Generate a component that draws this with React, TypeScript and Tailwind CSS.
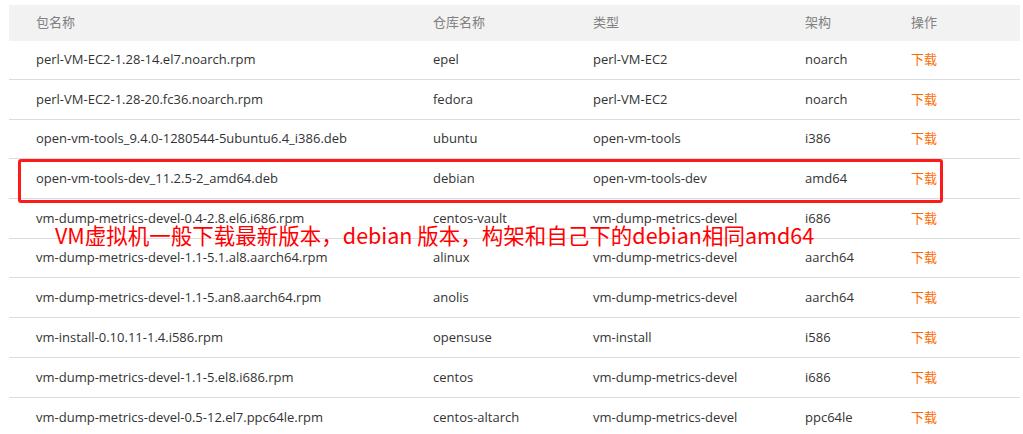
import React from "react";

type Row = {
  name: string;
  repo: string;
  kind: string;
  arch: string;
  h: string;
};

const ROWS: Row[] = [
  { name: "perl-VM-EC2-1.28-14.el7.noarch.rpm", repo: "epel", kind: "perl-VM-EC2", arch: "noarch", h: "h-[39px]" },
  { name: "perl-VM-EC2-1.28-20.fc36.noarch.rpm", repo: "fedora", kind: "perl-VM-EC2", arch: "noarch", h: "h-[40px]" },
  { name: "open-vm-tools_9.4.0-1280544-5ubuntu6.4_i386.deb", repo: "ubuntu", kind: "open-vm-tools", arch: "i386", h: "h-[39px]" },
  { name: "open-vm-tools-dev_11.2.5-2_amd64.deb", repo: "debian", kind: "open-vm-tools-dev", arch: "amd64", h: "h-[40px]" },
  { name: "vm-dump-metrics-devel-0.4-2.8.el6.i686.rpm", repo: "centos-vault", kind: "vm-dump-metrics-devel", arch: "i686", h: "h-[40px]" },
  { name: "vm-dump-metrics-devel-1.1-5.1.al8.aarch64.rpm", repo: "alinux", kind: "vm-dump-metrics-devel", arch: "aarch64", h: "h-[39px]" },
  { name: "vm-dump-metrics-devel-1.1-5.an8.aarch64.rpm", repo: "anolis", kind: "vm-dump-metrics-devel", arch: "aarch64", h: "h-[40px]" },
  { name: "vm-install-0.10.11-1.4.i586.rpm", repo: "opensuse", kind: "vm-install", arch: "i586", h: "h-[40px]" },
  { name: "vm-dump-metrics-devel-1.1-5.el8.i686.rpm", repo: "centos", kind: "vm-dump-metrics-devel", arch: "i686", h: "h-[40px]" },
  { name: "vm-dump-metrics-devel-0.5-12.el7.ppc64le.rpm", repo: "centos-altarch", kind: "vm-dump-metrics-devel", arch: "ppc64le", h: "h-[40px]" },
];

const FONT = "font-['Open_Sans','Noto_Sans_CJK_SC',sans-serif]";

export default function App() {
  return (
    <div className={`relative h-[434px] w-[1023px] overflow-hidden bg-white pl-[9px] pt-[5px] text-[13px] ${FONT}`}>
      <div className="w-[1011px]">
        <div className="flex h-[36px] items-center bg-[#f2f2f2] text-[#808080]">
          <div className="w-[424px] pl-[27px]">包名称</div>
          <div className="w-[160px]">仓库名称</div>
          <div className="w-[212px]">类型</div>
          <div className="w-[106px]">架构</div>
          <div className="flex-1">操作</div>
        </div>
        {ROWS.map((r) => (
          <div key={r.name} className={`flex items-center border-b border-[#dcdcdc] text-[#333] ${r.h}`}>
            <div className="w-[424px] pl-[27px]">{r.name}</div>
            <div className="w-[160px]">{r.repo}</div>
            <div className="w-[212px]">{r.kind}</div>
            <div className="w-[106px]">{r.arch}</div>
            <div className="flex-1 text-[#ff6a00]">下载</div>
          </div>
        ))}
      </div>

      {/* highlight + note drawn on top of the screenshot */}
      <div className="absolute left-[18px] top-[159px] h-[44px] w-[925px] rounded-[3px] border-[3px] border-[#ff1a1a]" />
      <div className="absolute left-[55px] top-[224px] whitespace-nowrap text-[21.5px] leading-none text-[#ff0000] font-['Noto_Sans_CJK_SC',sans-serif]">
        VM虚拟机一般下载最新版本，debian 版本，构架和自己下的debian相同amd64
      </div>
    </div>
  );
}
